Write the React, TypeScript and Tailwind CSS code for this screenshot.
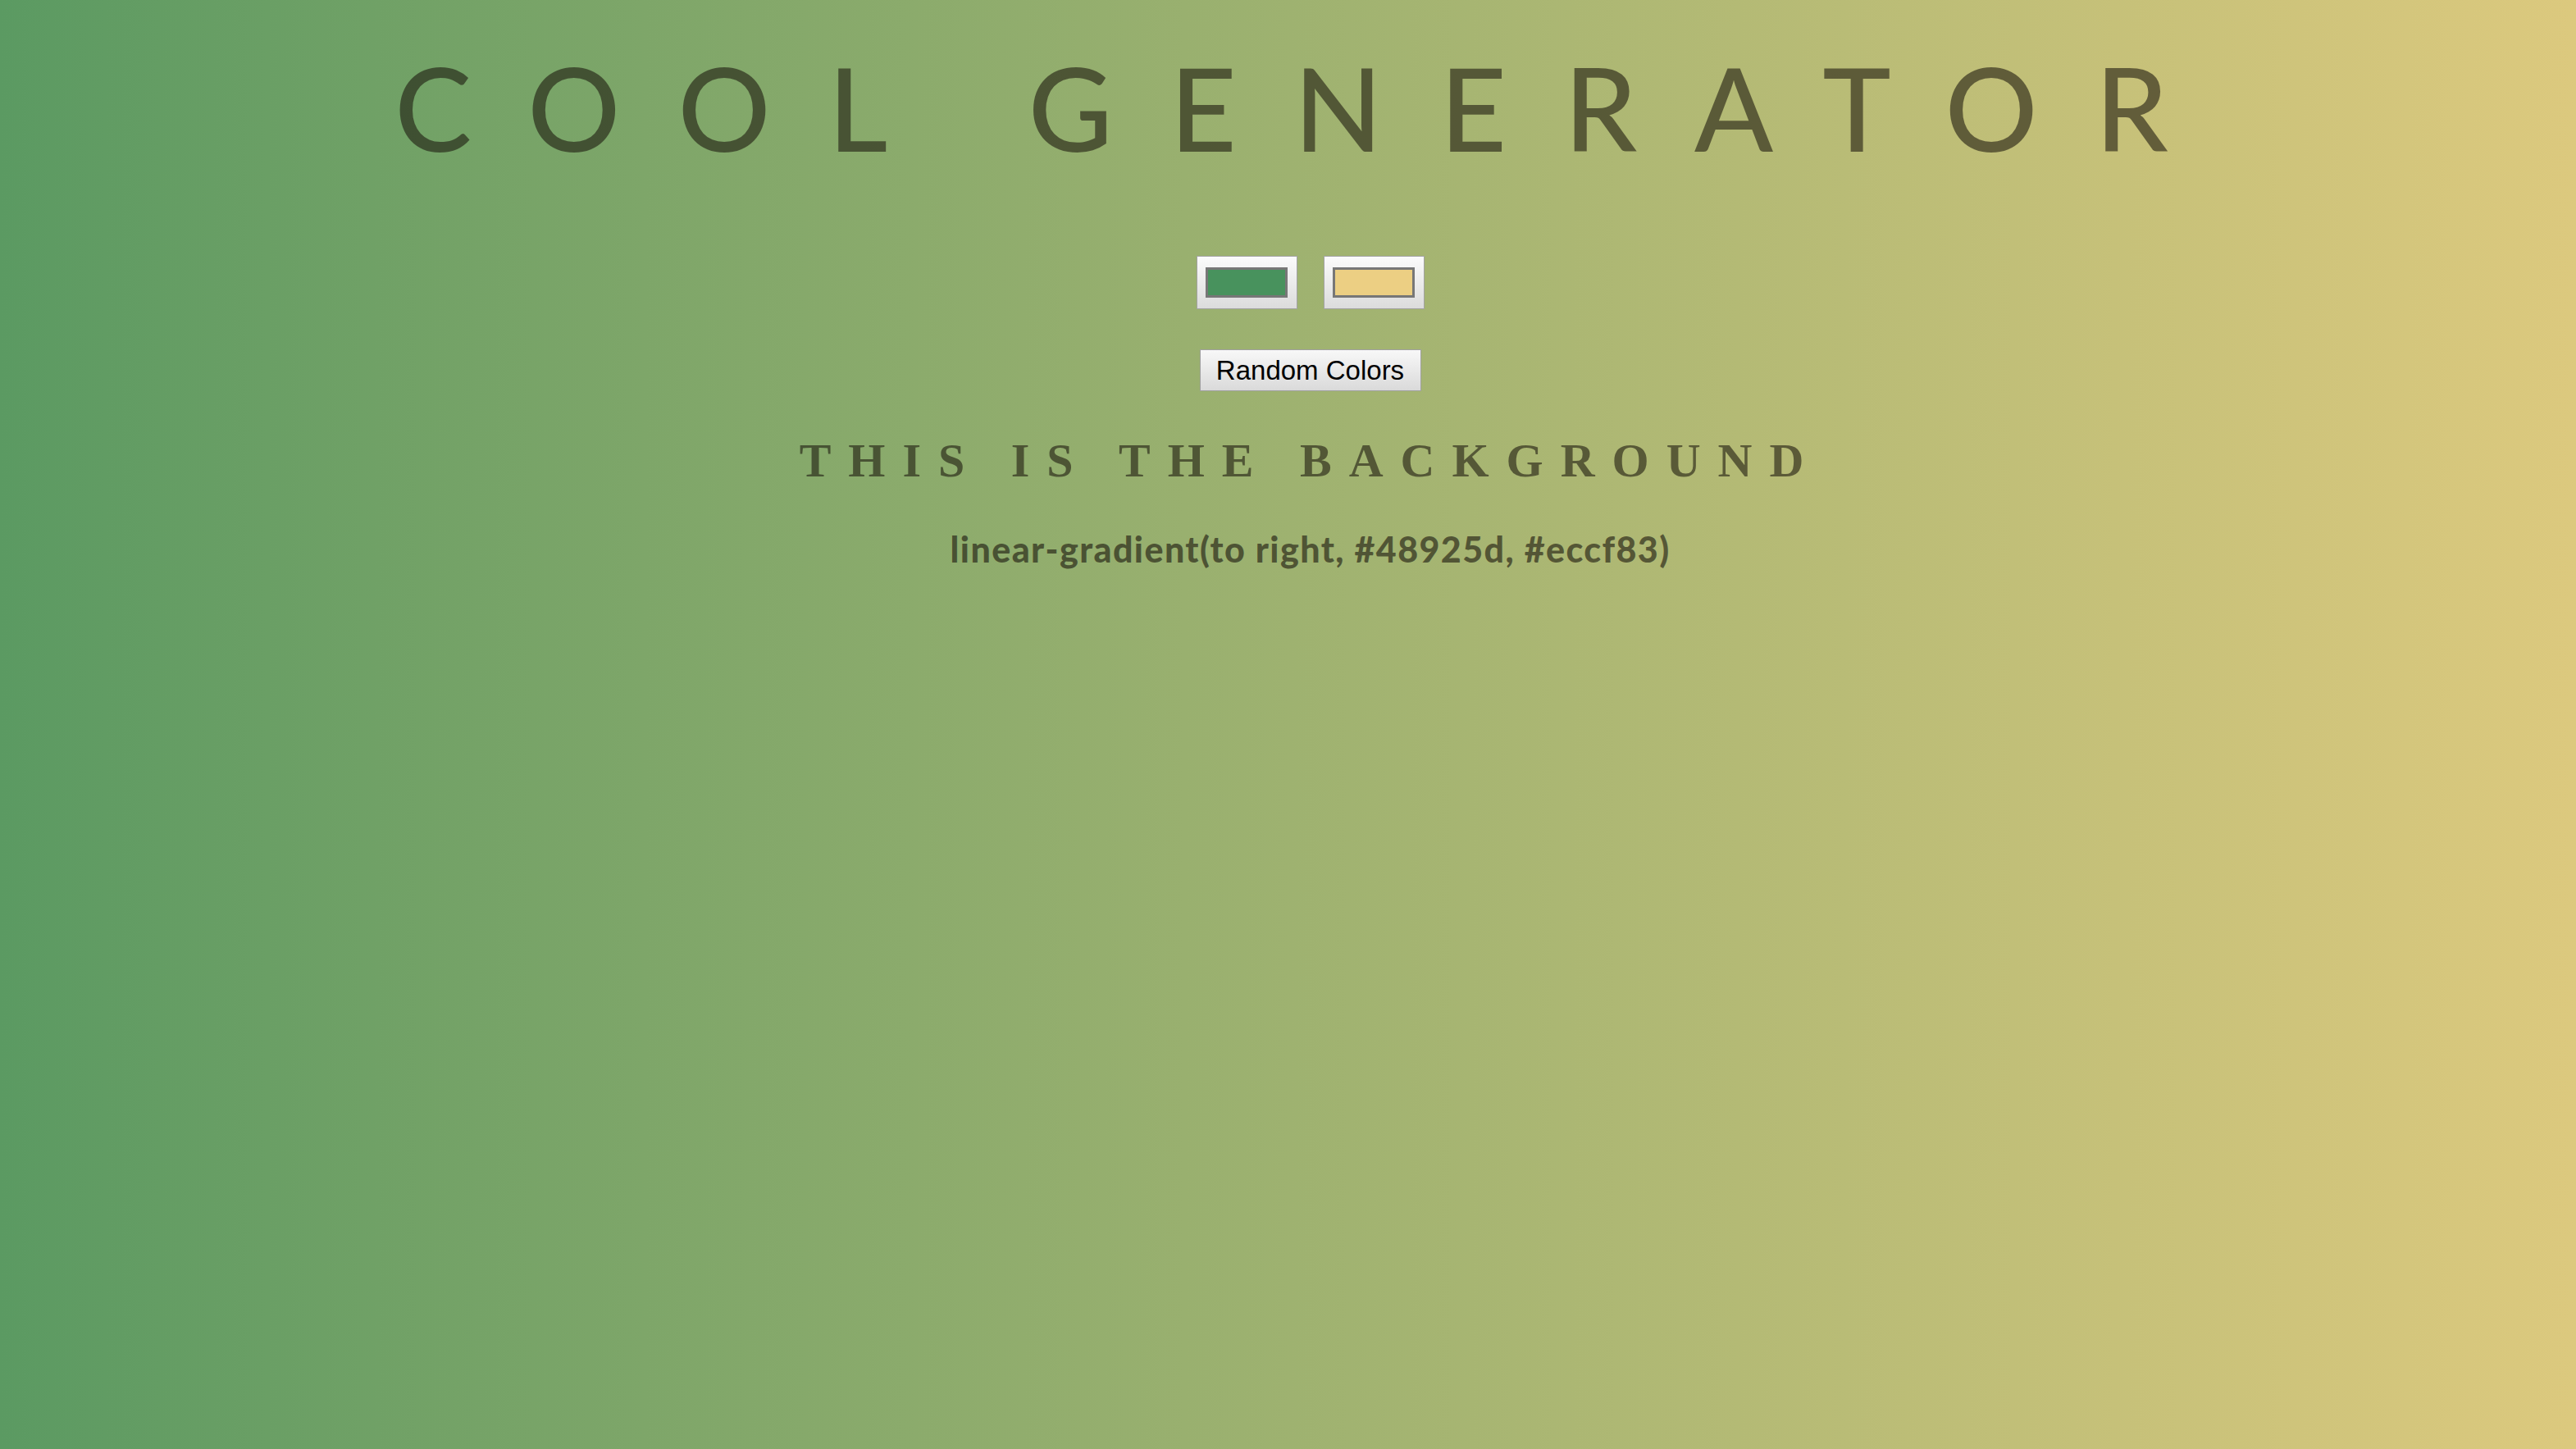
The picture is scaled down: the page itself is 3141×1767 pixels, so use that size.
const swatches = ["#48925d", "#eccf83"];

const ColorBox = ({ color }: { color: string }) => (
  <div className="w-[123px] h-[65px] border border-[#a3a3a3] bg-gradient-to-b from-[#fbfbfb] to-[#dcdcdc] flex items-center justify-center">
    <div
      className="w-[100px] h-[37px] border-[3px] border-[#777777]"
      style={{ backgroundColor: color }}
    />
  </div>
);

export default function App() {
  return (
    <div className="min-h-screen w-full bg-gradient-to-r from-[#5b9a62] to-[#dcc97e]">
      <div className="flex flex-col items-center pl-[54px] pt-[60px]">
        {/* Titulo */}
        <h1 className="font-['Lato',sans-serif] font-medium text-[141px] leading-none tracking-[70px] text-[rgba(25,20,12,0.58)] whitespace-nowrap">
          COOL GENERATOR
        </h1>

        {/* Selectores de color */}
        <div className="mt-[111px] flex gap-[32px]">
          {swatches.map((c) => (
            <ColorBox key={c} color={c} />
          ))}
        </div>

        <button className="mt-[49px] w-[270px] h-[51px] border border-[#a0a0a0] bg-gradient-to-b from-[#f8f8f8] to-[#dadada] font-['Liberation_Sans',Arial,sans-serif] text-[33px] leading-none text-black">
          Random Colors
        </button>

        <h2 className="mt-[56px] font-['Liberation_Serif',serif] font-bold text-[58px] leading-none tracking-[21px] text-[rgba(25,20,12,0.58)] whitespace-nowrap">
          THIS IS THE BACKGROUND
        </h2>

        <h3 className="mt-[57px] font-['Lato',sans-serif] font-black text-[43px] leading-none tracking-[1.4px] text-[rgba(25,20,12,0.6)] whitespace-nowrap">
          linear-gradient(to right, #48925d, #eccf83)
        </h3>
      </div>
    </div>
  );
}
